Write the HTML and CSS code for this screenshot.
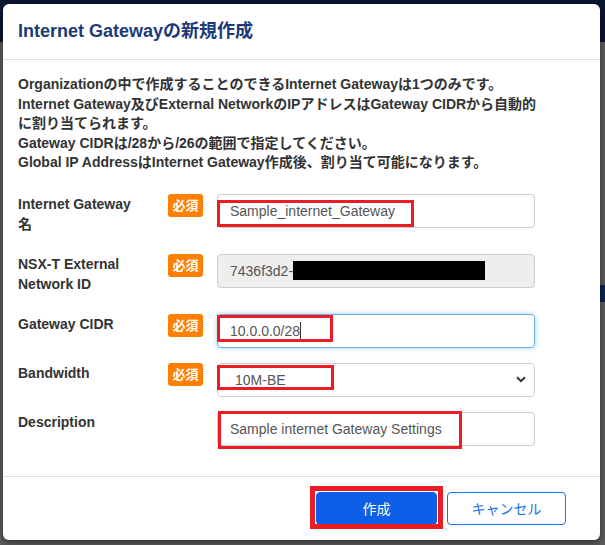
FILE: index.html
```html
<!DOCTYPE html>
<html lang="ja">
<head>
<meta charset="utf-8">
<title>Internet Gatewayの新規作成</title>
<link rel="stylesheet" href="styles.css">
</head>
<body>
<div class="backdrop">
  <div class="bg-header"></div>
  <div class="bg-band"></div>
</div>
<div class="modal">
  <div class="modal-header">
    <h1 class="modal-title">Internet Gatewayの新規作成</h1>
  </div>
  <div class="modal-body">
    <p class="intro">Organizationの中で作成することのできるInternet Gatewayは1つのみです。<br>Internet Gateway及びExternal NetworkのIPアドレスはGateway CIDRから自動的<br>に割り当てられます。<br>Gateway CIDRは/28から/26の範囲で指定してください。<br>Global IP AddressはInternet Gateway作成後、割り当て可能になります。</p>
    <div class="form">
      <div class="row">
        <div class="label">Internet Gateway 名</div>
        <span class="badge">必須</span>
        <div class="field">
          <div class="control">Sample_internet_Gateway</div>
          <span class="mark mark-name"></span>
        </div>
      </div>
      <div class="row">
        <div class="label">NSX-T External Network ID</div>
        <span class="badge">必須</span>
        <div class="field">
          <div class="control readonly">7436f3d2-<span class="redact"></span></div>
        </div>
      </div>
      <div class="row">
        <div class="label">Gateway CIDR</div>
        <span class="badge">必須</span>
        <div class="field">
          <div class="control focus">10.0.0.0/28<span class="caret"></span></div>
          <span class="mark mark-cidr"></span>
        </div>
      </div>
      <div class="row">
        <div class="label">Bandwidth</div>
        <span class="badge">必須</span>
        <div class="field">
          <div class="control select"><span>10M-BE</span>
            <svg class="chev" width="10" height="7" viewBox="0 0 10 7"><path d="M1 1.2 L5 5.2 L9 1.2" fill="none" stroke="#333" stroke-width="2"/></svg>
          </div>
          <span class="mark mark-bw"></span>
        </div>
      </div>
      <div class="row">
        <div class="label">Description</div>
        <span class="badge-space"></span>
        <div class="field">
          <div class="control">Sample internet Gateway Settings</div>
          <span class="mark mark-desc"></span>
        </div>
      </div>
    </div>
  </div>
  <div class="modal-footer">
    <div class="btn-wrap">
      <button class="btn btn-primary">作成</button>
      <span class="mark mark-btn"></span>
    </div>
    <button class="btn btn-outline">キャンセル</button>
  </div>
</div>
</body>
</html>
```

FILE: styles.css
```css
html, body {
  margin: 0;
  padding: 0;
}
body {
  width: 605px;
  height: 545px;
  overflow: hidden;
  background: #5a5a5a;
  font-family: "Liberation Sans", "Noto Sans CJK JP", sans-serif;
  color: #333;
  position: relative;
}
.backdrop {
  position: absolute;
  inset: 0;
}
.bg-header {
  height: 42px;
  background: #0a1630;
}
.bg-band {
  position: absolute;
  right: 0;
  top: 285px;
  width: 8px;
  height: 17px;
  background: #0c2350;
}
.modal {
  position: absolute;
  left: 3px;
  top: 4px;
  width: 597px;
  height: 536px;
  background: #fff;
  border-radius: 6px;
  box-shadow: 0 2px 6px rgba(0,0,0,0.45);
  box-sizing: border-box;
}
.modal-header {
  padding: 15px 15px;
  border-bottom: 1px solid #e0e0e0;
  height: 56px;
  box-sizing: border-box;
}
.modal-title {
  margin: 0;
  font-size: 18px;
  line-height: 24px;
  font-weight: bold;
  color: #1c3a78;
}
.modal-body {
  padding: 15px 15px 30px;
}
.intro {
  margin: 0 0 21px;
  font-size: 14px;
  line-height: 19.6px;
  font-weight: bold;
  color: #333;
}
.row {
  display: flex;
  align-items: flex-start;
  margin-bottom: 15px;
}
.row:last-child {
  margin-bottom: 0;
}
.label {
  width: 130px;
  margin-right: 20px;
  font-size: 14px;
  line-height: 20px;
  font-weight: bold;
  color: #333;
  margin-bottom: 5px;
}
.badge, .badge-space {
  width: 35px;
  height: 23px;
  margin-right: 14px;
  flex: none;
}
.badge {
  background: #ff8000;
  color: #fff;
  border-radius: 3px;
  font-size: 13px;
  font-weight: bold;
  line-height: 23px;
  text-align: center;
}
.field {
  position: relative;
  width: 318px;
}
.control {
  height: 34px;
  box-sizing: border-box;
  border: 1px solid #ccc;
  border-radius: 4px;
  padding: 0 12px;
  font-size: 14px;
  line-height: 32px;
  color: #555;
  background: #fff;
  white-space: nowrap;
}
.readonly {
  background: #eee;
}
.redact {
  display: inline-block;
  width: 192px;
  height: 19px;
  background: #000;
  vertical-align: -4px;
}
.focus {
  border-color: #66afe9;
  box-shadow: 0 0 5px rgba(102,175,233,0.6);
}
.caret {
  display: inline-block;
  width: 1px;
  height: 17px;
  background: #333;
  vertical-align: -3px;
}
.select {
  display: flex;
  align-items: center;
  justify-content: space-between;
  padding: 0 8px 0 17px;
}
.chev {
  display: block;
}
.mark {
  position: absolute;
  border: 3px solid #ec1c24;
  box-sizing: border-box;
  pointer-events: none;
}
.mark-name { left: 0; top: 6px; width: 197px; height: 27px; }
.mark-cidr { left: 0; top: 1px; width: 116px; height: 27px; }
.mark-bw { left: 0; top: 2px; width: 117px; height: 25px; }
.mark-desc { left: 1px; top: -1px; width: 244px; height: 38px; }
.modal-footer {
  border-top: 1px solid #e0e0e0;
  padding: 15px 34px 15px 15px;
  display: flex;
  justify-content: flex-end;
  gap: 10px;
}
.btn-wrap {
  position: relative;
}
.btn {
  display: block;
  height: 33px;
  border-radius: 4px;
  font-family: "Liberation Sans", "Noto Sans CJK JP", sans-serif;
  font-size: 14px;
  box-sizing: border-box;
  padding: 0;
}
.btn-primary {
  width: 121px;
  background: #0d5fe7;
  border: 1px solid #0d5fe7;
  color: #fff;
}
.btn-outline {
  width: 119px;
  background: #fff;
  border: 1px solid #1a73e8;
  color: #1a73e8;
}
.mark-btn {
  left: -6px;
  top: -6px;
  width: 133px;
  height: 43px;
  border-width: 5px;
}
```
